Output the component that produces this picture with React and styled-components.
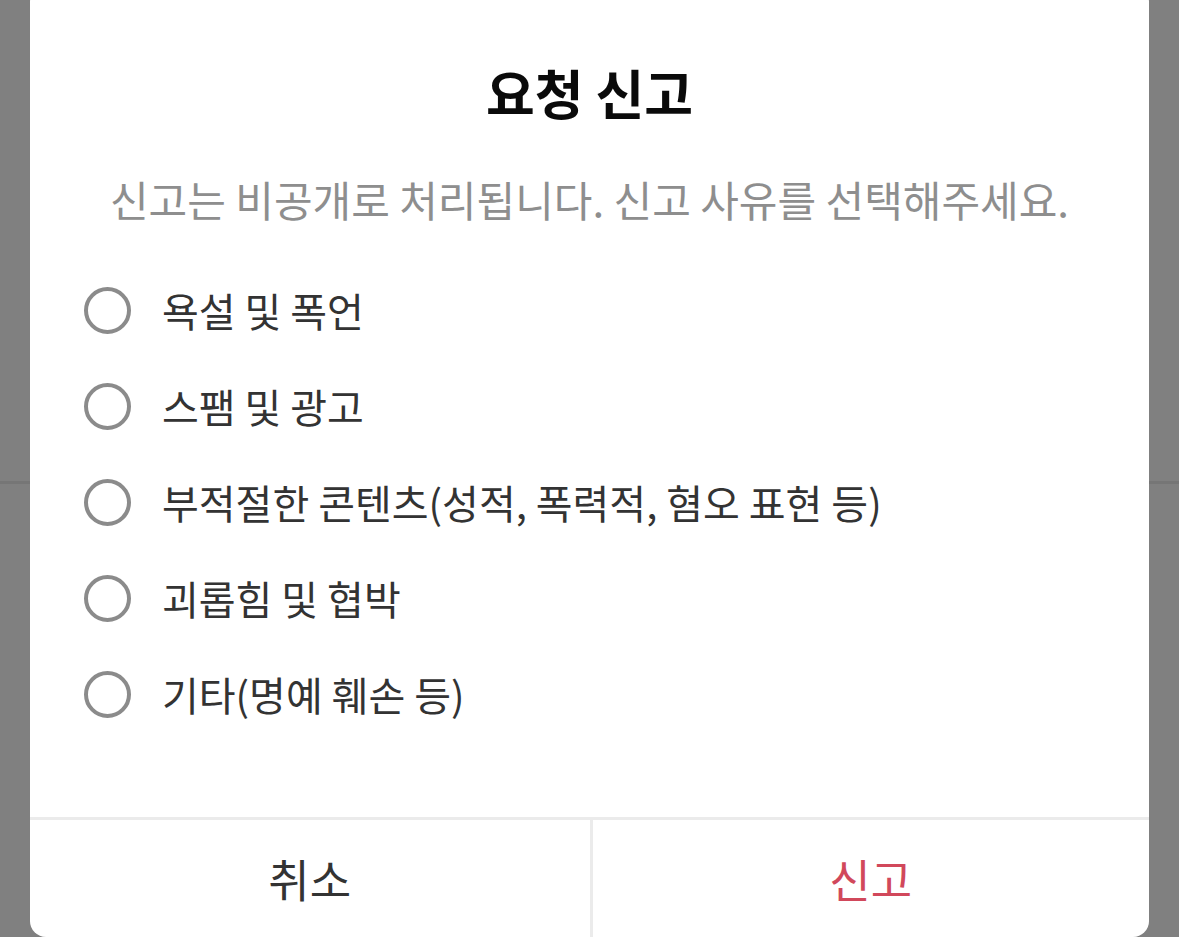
import styled, { createGlobalStyle } from "styled-components";

const GlobalStyle = createGlobalStyle`
  html, body {
    margin: 0;
    padding: 0;
    background: #808080;
  }
  body {
    font-family: "Noto Sans CJK KR", "Noto Sans", sans-serif;
  }
`;

const Backdrop = styled.div`
  width: 1179px;
  height: 937px;
  overflow: hidden;
  background:
    linear-gradient(
      to bottom,
      transparent 481px,
      #767676 481px,
      #767676 484px,
      transparent 484px
    ),
    #808080;
`;

const Dialog = styled.div`
  width: 1119px;
  height: 951px;
  margin: -14px 0 0 30px;
  background: #ffffff;
  border-radius: 16px;
  display: flex;
  flex-direction: column;
  box-sizing: border-box;
  padding-top: 76px;
`;

const Title = styled.h2`
  margin: 0;
  height: 60px;
  line-height: 60px;
  font-size: 53px;
  font-weight: 700;
  color: #0a0a0a;
  text-align: center;
`;

const Subtitle = styled.p`
  margin: 52px 0 0;
  height: 50px;
  line-height: 50px;
  font-size: 42px;
  color: #8e8e8e;
  text-align: center;
`;

const OptionList = styled.ul`
  list-style: none;
  margin: 38px 0 0;
  padding: 0 0 0 54px;
  display: flex;
  flex-direction: column;
`;

const Option = styled.li`
  height: 96px;
  display: flex;
  align-items: center;
  gap: 31px;
  cursor: pointer;
`;

const Radio = styled.span`
  width: 47px;
  height: 47px;
  box-sizing: border-box;
  border-radius: 50%;
  border: 4px solid ${(p) => (p.checked ? "#d1485b" : "#8b8b8b")};
  flex-shrink: 0;
`;

const OptionLabel = styled.span`
  font-size: 40px;
  line-height: 1;
  color: #333333;
`;

const Spacer = styled.div`
  flex: 1;
`;

const Footer = styled.div`
  height: 120px;
  border-top: 3px solid #ebebeb;
  display: grid;
  grid-template-columns: 1fr 1fr;
  box-sizing: border-box;
`;

const FooterButton = styled.button`
  border: none;
  background: transparent;
  font-family: inherit;
  font-size: 45px;
  color: ${(p) => (p.danger ? "#d1485b" : "#333333")};
  border-left: ${(p) => (p.divided ? "3px solid #ebebeb" : "none")};
  cursor: pointer;
  padding: 0;
`;

const reasons = [
  "욕설 및 폭언",
  "스팸 및 광고",
  "부적절한 콘텐츠(성적, 폭력적, 혐오 표현 등)",
  "괴롭힘 및 협박",
  "기타(명예 훼손 등)",
];

export default function App() {
  return (
    <>
      <GlobalStyle />
      <Backdrop>
        <Dialog>
          <Title>요청 신고</Title>
          <Subtitle>신고는 비공개로 처리됩니다. 신고 사유를 선택해주세요.</Subtitle>
          <OptionList>
            {reasons.map((r) => (
              <Option key={r}>
                <Radio />
                <OptionLabel>{r}</OptionLabel>
              </Option>
            ))}
          </OptionList>
          <Spacer />
          <Footer>
            <FooterButton>취소</FooterButton>
            <FooterButton danger divided>
              신고
            </FooterButton>
          </Footer>
        </Dialog>
      </Backdrop>
    </>
  );
}
